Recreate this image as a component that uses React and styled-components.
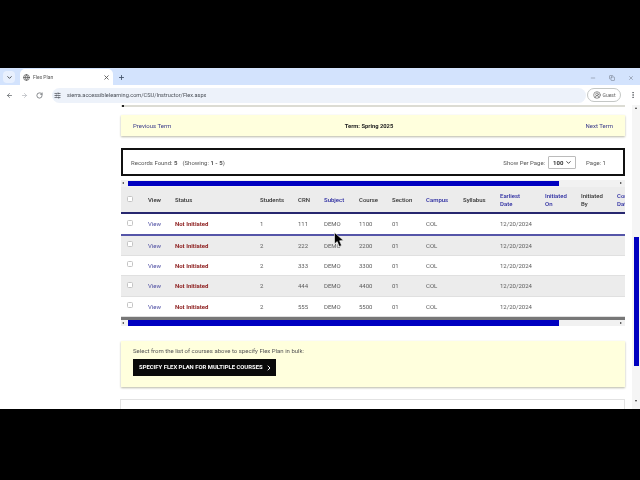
import React from 'react';
import styled, { createGlobalStyle } from 'styled-components';
import { ChevronDown, ChevronRight, ArrowLeft, ArrowRight, RotateCw, X, Plus, Minus, Copy, Globe, CircleUserRound, EllipsisVertical, SlidersHorizontal } from 'lucide-react';

const Global = createGlobalStyle`
  html, body { margin: 0; padding: 0; background: #000; }
  body { font-family: Roboto, "Liberation Sans", sans-serif; }
`;

const Frame = styled.div`
  position: relative;
  width: 640px;
  height: 480px;
  background: #000;
  padding-top: 68px;
  box-sizing: border-box;
  overflow: hidden;
  filter: blur(0.3px);
`;

const TabStrip = styled.div`
  height: 17px;
  background: #d3e3fd;
  display: flex;
  align-items: flex-end;
  padding-left: 3px;
  color: #3c4043;
`;

const TabMenu = styled.div`
  width: 12px;
  height: 12px;
  margin-bottom: 2px;
  border-radius: 4px;
  background: #e8f0fe;
  display: flex;
  align-items: center;
  justify-content: center;
`;

const Tab = styled.div`
  width: 93px;
  height: 16px;
  margin-left: 5px;
  background: #fff;
  border-radius: 5px 5px 0 0;
  display: flex;
  align-items: center;
  gap: 3px;
  padding: 0 3px;
  box-sizing: border-box;
  font-size: 5px;
  color: #555;
`;

const TabTitle = styled.span`
  flex: 1;
`;

const NewTab = styled.div`
  margin: 0 0 4px 5px;
  display: flex;
  color: #44546a;
`;

const WindowControls = styled.div`
  margin: 0 6px 4px auto;
  display: flex;
  gap: 13px;
  color: #6b7280;
`;

const Toolbar = styled.div`
  height: 20px;
  background: #fff;
  display: flex;
  align-items: center;
  padding: 0 3px 0 6px;
  gap: 8px;
  color: #5f6368;
`;

const Omnibox = styled.div`
  width: 535px;
  height: 15px;
  margin: 0 -7px 0 1px;
  border-radius: 8px;
  background: #edf2fa;
  display: flex;
  align-items: center;
  gap: 6px;
  padding-left: 2px;
  box-sizing: border-box;
  font-size: 5.6px;
  color: #4a4f57;
`;

const GuestChip = styled.div`
  width: 34px;
  height: 14px;
  box-sizing: border-box;
  border: 1px solid #c4c7c5;
  border-radius: 8px;
  display: flex;
  align-items: center;
  justify-content: center;
  gap: 2px;
  font-size: 5px;
  color: #666;
`;

const Viewport = styled.div`
  height: 304px;
  background: #fff;
  display: flex;
  overflow: hidden;
`;

const Page = styled.div`
  width: 632px;
  padding-left: 121px;
  box-sizing: border-box;
  display: flex;
  flex-direction: column;
`;

const Content = styled.div`
  width: 504px;
  display: flex;
  flex-direction: column;
`;

const TopRule = styled.div`
  height: 2px;
  background: #dcdcd4;
  margin-bottom: 8px;
  position: relative;

  &::before {
    content: '';
    position: absolute;
    left: 1px;
    top: 0;
    width: 2px;
    height: 2px;
    background: #222;
  }
`;

const TermBar = styled.div`
  height: 21px;
  background: #ffffdd;
  box-shadow: 0 1px 2px #b9b9a8;
  display: grid;
  grid-template-columns: 1fr auto 1fr;
  align-items: center;
  padding: 0 12px;
  font-size: 6px;
  color: #444;
  margin-bottom: 12px;
`;

const TermLink = styled.span`
  color: #3a3a8c;
  text-align: ${({ $end }) => ($end ? 'right' : 'left')};
`;

const TermName = styled.b`
  color: #222;
  font-size: 5.8px;
  margin-right: 8px;
`;

const RecordsBar = styled.div`
  height: 28px;
  box-sizing: border-box;
  border: 2px solid #111;
  display: flex;
  align-items: center;
  padding: 0 17px 0 8px;
  font-size: 6px;
  color: #555;
  margin-bottom: 4px;
`;

const Showing = styled.span`
  margin-left: 5px;
`;

const PerPage = styled.span`
  margin-left: auto;
`;

const Select = styled.span`
  width: 28px;
  height: 13px;
  box-sizing: border-box;
  margin: 0 10px 0 3px;
  border: 1px solid #bbb;
  border-radius: 1px;
  display: inline-flex;
  align-items: center;
  justify-content: space-between;
  padding: 0 3px 0 4px;
  font-weight: 700;
  color: #333;
`;

const HScroll = styled.div`
  height: ${({ $low }) => ($low ? 6 : 7)}px;
  background: #f1f1f1;
  display: flex;
  align-items: center;
  padding-left: 7px;
  position: relative;
`;

const HThumb = styled.div`
  width: 431px;
  height: ${({ $tall }) => ($tall ? 6 : 5)}px;
  background: #0000c0;
`;

const Arrow = styled.i`
  position: absolute;
  top: 2px;
  ${({ $right }) => ($right ? 'right: 3px' : 'left: 1px')};
  border-style: solid;
  border-width: 1.5px;
  border-color: transparent;
  ${({ $right }) => ($right ? 'border-left: 2px solid #333; border-right: 0' : 'border-right: 2px solid #333; border-left: 0')};
`;

const TableClip = styled.div`
  overflow: hidden;
`;

const columns = '27px 27px 85px 38px 26px 35px 33px 34px 37px 37px 45px 36px 36px 30px';

const HeadRow = styled.div`
  display: grid;
  grid-template-columns: ${columns};
  width: 504px;
  height: 25px;
  box-sizing: content-box;
  align-items: center;
  background: #ececec;
  border-bottom: 2px solid #27276f;
  font-size: 6px;
  line-height: 8px;
  font-weight: 500;
  color: #333;
`;

const Row = styled.div`
  display: grid;
  grid-template-columns: ${columns};
  width: 504px;
  height: ${({ $h }) => $h}px;
  box-sizing: border-box;
  padding-bottom: 1px;
  align-items: center;
  background: ${({ $alt }) => ($alt ? '#ececec' : '#fff')};
  border-bottom: ${({ $active }) => ($active ? '2px solid #5555a8' : '1px solid #e0e0e0')};
  font-size: 6px;
  color: #5c5c5c;
`;

const HeadLink = styled.span`
  color: #2a2aa0;
`;

const ViewLink = styled.span`
  color: #4a4aa0;
`;

const Status = styled.b`
  color: #8f2222;
  font-weight: 700;
`;

const Check = styled.span`
  width: 6px;
  height: 6px;
  box-sizing: border-box;
  margin: -2px 0 0 6px;
  border: 1px solid #c4c4c4;
  border-radius: 1.5px;
  background: #fff;
`;

const TableEnd = styled.div`
  height: 3px;
  background: #777;
`;

const BulkPanel = styled.div`
  height: 46px;
  margin-top: 15px;
  box-sizing: border-box;
  background: #ffffdd;
  box-shadow: 0 1px 2px #b9b9a8;
  padding: 6px 12px 0;
  font-size: 6px;
  line-height: 7px;
  color: #555;
`;

const BulkButton = styled.div`
  width: 143px;
  height: 17px;
  margin-top: 5px;
  background: #0a0a0a;
  color: #fff;
  display: flex;
  align-items: center;
  justify-content: space-between;
  padding: 0 3px 0 6px;
  box-sizing: border-box;
  font-size: 5.9px;
  font-weight: 700;
`;

const NextCard = styled.div`
  height: 20px;
  margin-top: 12px;
  border: 1px solid #e2e2e2;
  box-sizing: border-box;
  margin-left: -1px;
`;

const VScroll = styled.div`
  width: 8px;
  box-sizing: border-box;
  background: #f5f5f5;
  padding: 132px 1px 0 2px;
  position: relative;
`;

const VThumb = styled.div`
  height: 129px;
  background: #0000c0;
`;

const ScrollArrow = styled.i`
  position: absolute;
  left: 3px;
  ${({ $down }) => ($down ? 'top: 295px' : 'top: 2px')};
  border-left: 1.5px solid transparent;
  border-right: 1.5px solid transparent;
  ${({ $down }) => ($down ? 'border-top: 2px solid #333' : 'border-bottom: 2px solid #333')};
`;

const Cursor = styled.svg`
  position: absolute;
  left: 334px;
  top: 232px;
`;

const rows = [
  { n: 1, crn: 111, course: 1100, h: 22, active: true },
  { n: 2, crn: 222, course: 2200, h: 20, alt: true },
  { n: 2, crn: 333, course: 3300, h: 20 },
  { n: 2, crn: 444, course: 4400, h: 21, alt: true },
  { n: 2, crn: 555, course: 5500, h: 20 },
];

export default function App() {
  return (
    <Frame>
      <Global />
      <TabStrip>
        <TabMenu><ChevronDown size={7} strokeWidth={3} /></TabMenu>
        <Tab>
          <Globe size={7} strokeWidth={2.5} />
          <TabTitle>Flex Plan</TabTitle>
          <X size={7} strokeWidth={3} />
        </Tab>
        <NewTab><Plus size={7} strokeWidth={3} /></NewTab>
        <WindowControls>
          <Minus size={6} />
          <Copy size={6} />
          <X size={6} />
        </WindowControls>
      </TabStrip>
      <Toolbar>
        <ArrowLeft size={7} strokeWidth={2.5} />
        <ArrowRight size={7} color="#b5b8bd" strokeWidth={2.5} />
        <RotateCw size={7} strokeWidth={2.5} />
        <Omnibox>
          <SlidersHorizontal size={7} strokeWidth={2.5} />
          sierra.accessiblelearning.com/CSU/Instructor/Flex.aspx
        </Omnibox>
        <GuestChip><CircleUserRound size={8} strokeWidth={2} />Guest</GuestChip>
        <EllipsisVertical size={8} strokeWidth={2.5} />
      </Toolbar>
      <Viewport>
        <Page>
          <Content>
            <TopRule />
            <TermBar>
              <TermLink>Previous Term</TermLink>
              <TermName>Term: Spring 2025</TermName>
              <TermLink $end>Next Term</TermLink>
            </TermBar>
            <RecordsBar>
              <span>Records Found: <b>5</b></span>
              <Showing>(Showing: <b>1 - 5</b>)</Showing>
              <PerPage>Show Per Page:</PerPage>
              <Select>100<ChevronDown size={7} strokeWidth={3} /></Select>
              Page: 1
            </RecordsBar>
            <HScroll>
              <Arrow />
              <HThumb />
              <Arrow $right />
            </HScroll>
            <TableClip>
              <HeadRow>
                <Check />
                <span>View</span>
                <span>Status</span>
                <span>Students</span>
                <span>CRN</span>
                <HeadLink>Subject</HeadLink>
                <span>Course</span>
                <span>Section</span>
                <HeadLink>Campus</HeadLink>
                <span>Syllabus</span>
                <HeadLink>Earliest<br />Date</HeadLink>
                <HeadLink>Initiated<br />On</HeadLink>
                <span>Initiated<br />By</span>
                <HeadLink>Comp<br />Date</HeadLink>
              </HeadRow>
              {rows.map((row) => (
                <Row key={row.crn} $h={row.h} $alt={row.alt} $active={row.active}>
                  <Check />
                  <ViewLink>View</ViewLink>
                  <Status>Not Initiated</Status>
                  <span>{row.n}</span>
                  <span>{row.crn}</span>
                  <span>DEMO</span>
                  <span>{row.course}</span>
                  <span>01</span>
                  <span>COL</span>
                  <span />
                  <span>12/20/2024</span>
                </Row>
              ))}
            </TableClip>
            <TableEnd />
            <HScroll $low>
              <Arrow />
              <HThumb $tall />
              <Arrow $right />
            </HScroll>
            <BulkPanel>
              Select from the list of courses above to specify Flex Plan in bulk:
              <BulkButton>
                SPECIFY FLEX PLAN FOR MULTIPLE COURSES
                <ChevronRight size={8} strokeWidth={3} />
              </BulkButton>
            </BulkPanel>
            <NextCard />
          </Content>
        </Page>
        <VScroll>
          <ScrollArrow />
          <VThumb />
          <ScrollArrow $down />
        </VScroll>
      </Viewport>
      <Cursor width="11" height="16" viewBox="0 0 11 16">
        <path d="M0.5 0.5 L0.5 12 L3.2 9.6 L5.2 14.5 L7.6 13.5 L5.6 8.8 L9.5 8.6 Z" fill="#000" stroke="#fff" strokeWidth="0.6" />
      </Cursor>
    </Frame>
  );
}
